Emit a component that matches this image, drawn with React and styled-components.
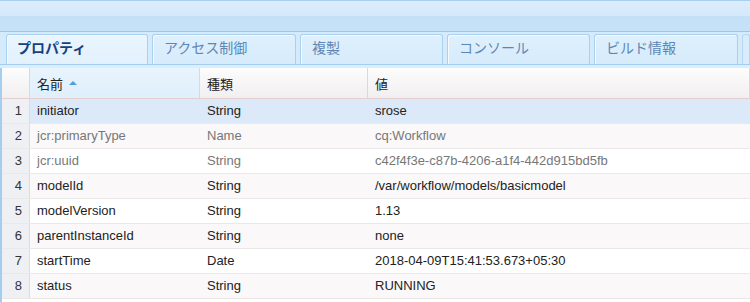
import styled, { createGlobalStyle } from 'styled-components';

const GlobalStyle = createGlobalStyle`
  html, body {
    margin: 0;
    padding: 0;
    background: #ffffff;
  }
  body {
    font-family: "Liberation Sans", Arial, "Noto Sans CJK JP", sans-serif;
  }
`;

const Panel = styled.div`
  width: 750px;
  height: 302px;
  overflow: hidden;
  background: #ffffff;
  display: flex;
  flex-direction: column;
`;

// 上部のヘッダーバー
const TopBar = styled.div`
  height: 30px;
  border-top: 1px solid #a6cff0;
  border-bottom: 1px solid #98c6ec;
  background: linear-gradient(#dcedfb 0, #d4e9fa 48%, #c4e0f7 52%, #c7e2f8 100%);
  flex: none;
`;

// タブのストリップ
const TabStrip = styled.div`
  height: 30px;
  padding: 2px 0 0 6px;
  display: flex;
  gap: 4px;
  background: #d5eafb;
  flex: none;
`;

const Tab = styled.div`
  width: ${(p) => p.$w}px;
  box-sizing: border-box;
  height: 30px;
  border: 1px solid #a8d1f1;
  border-bottom: none;
  border-radius: 3px 3px 0 0;
  box-shadow: inset 1px 1px 0 #f4faff;
  background: ${(p) =>
    p.$active
      ? 'linear-gradient(#eaf5fe, #e2f1fd)'
      : 'linear-gradient(#dff0fd, #d6ebfb)'};
  color: ${(p) => (p.$active ? '#16417d' : '#5d86b4')};
  font-family: "Noto Sans CJK JP", "Liberation Sans", sans-serif;
  font-size: 14px;
  line-height: 20px;
  font-weight: ${(p) => (p.$active ? 700 : 400)};
  padding: 2px 0 0 ${(p) => (p.$active ? 10 : 11)}px;
  white-space: nowrap;
  flex: none;
`;

const TabRest = styled.div`
  flex: 1;
  height: 30px;
  box-sizing: border-box;
  border: 1px solid #b4d8f4;
  border-bottom: none;
  border-radius: 3px 3px 0 0;
  background: #d9ecfb;
`;

const TabFloor = styled.div`
  height: 3px;
  border-top: 1px solid #a3cdef;
  background: #dbeefc;
  flex: none;
`;

// グリッド部分
const Grid = styled.div`
  border-left: 2px solid #a4cdee;
  flex: 1;
`;

const cols = '28px 170px 168px 1fr';

const HeaderRow = styled.div`
  display: grid;
  grid-template-columns: ${cols};
  height: 30px;
  border-bottom: 1px solid #e3cfcf;
  background: linear-gradient(#fdfcfc, #f1eff0);
`;

const HeaderCell = styled.div`
  box-sizing: border-box;
  border-right: 1px solid ${(p) => (p.$sorted ? '#c4dff4' : '#dcd8d8')};
  background: ${(p) => (p.$sorted ? 'linear-gradient(#e8f4fd, #dfeffc)' : 'transparent')};
  padding: 6px 0 0 7px;
  font-family: "Noto Sans CJK JP", "Liberation Sans", sans-serif;
  font-size: 13px;
  line-height: 19px;
  color: #222;
  display: flex;
  align-items: flex-start;
  gap: 6px;
`;

const SortArrow = styled.span`
  width: 0;
  height: 0;
  margin-top: 7px;
  border-left: 4px solid transparent;
  border-right: 4px solid transparent;
  border-bottom: 4px solid #4f9ee0;
`;

const Row = styled.div`
  display: grid;
  grid-template-columns: ${cols};
  height: 24px;
  border-bottom: 1px solid #ebe8e8;
  background: ${(p) => (p.$selected ? '#dce9f8' : p.$alt ? '#faf8f8' : '#ffffff')};
  color: ${(p) => (p.$muted ? '#777777' : '#222222')};
  font-size: 13px;
  line-height: 15px;
`;

const NumCell = styled.div`
  box-sizing: border-box;
  background: #eef0f3;
  border-right: 1px solid #dcdcdc;
  color: #333;
  text-align: right;
  padding: 4px 7px 0 0;
`;

const Cell = styled.div`
  box-sizing: border-box;
  padding: 4px 0 0 7px;
  white-space: nowrap;
  overflow: hidden;
`;

const tabs = [
  { label: 'プロパティ', w: 142, active: true },
  { label: 'アクセス制御', w: 144 },
  { label: '複製', w: 143 },
  { label: 'コンソール', w: 143 },
  { label: 'ビルド情報', w: 144 },
];

const rows = [
  ['initiator', 'String', 'srose'],
  ['jcr:primaryType', 'Name', 'cq:Workflow', true],
  ['jcr:uuid', 'String', 'c42f4f3e-c87b-4206-a1f4-442d915bd5fb', true],
  ['modelId', 'String', '/var/workflow/models/basicmodel'],
  ['modelVersion', 'String', '1.13'],
  ['parentInstanceId', 'String', 'none'],
  ['startTime', 'Date', '2018-04-09T15:41:53.673+05:30'],
  ['status', 'String', 'RUNNING'],
];

const App = () => {
  return (
    <Panel>
      <GlobalStyle />
      <TopBar />
      <TabStrip>
        {tabs.map((t) => (
          <Tab key={t.label} $w={t.w} $active={t.active}>
            {t.label}
          </Tab>
        ))}
        <TabRest />
      </TabStrip>
      <TabFloor />
      <Grid>
        <HeaderRow>
          <HeaderCell />
          <HeaderCell $sorted>
            名前
            <SortArrow />
          </HeaderCell>
          <HeaderCell>種類</HeaderCell>
          <HeaderCell>値</HeaderCell>
        </HeaderRow>
        {rows.map(([name, type, value, muted], i) => (
          <Row key={name} $selected={i === 0} $alt={i % 2 === 1} $muted={muted}>
            <NumCell>{i + 1}</NumCell>
            <Cell>{name}</Cell>
            <Cell>{type}</Cell>
            <Cell>{value}</Cell>
          </Row>
        ))}
      </Grid>
    </Panel>
  );
};

export default App;
